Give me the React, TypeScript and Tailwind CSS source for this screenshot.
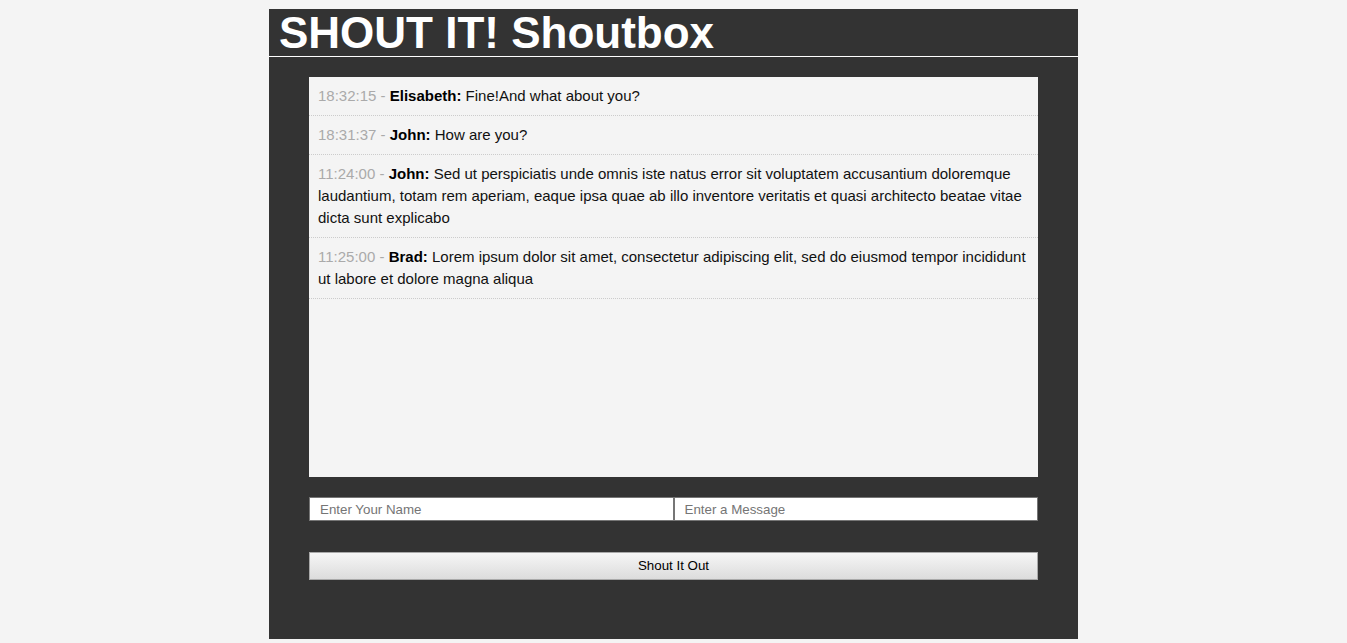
import React from "react";

const msgs = [
  { t: "18:32:15", n: "Elisabeth", m: "Fine!And what about you?" },
  { t: "18:31:37", n: "John", m: "How are you?" },
  {
    t: "11:24:00",
    n: "John",
    m: "Sed ut perspiciatis unde omnis iste natus error sit voluptatem accusantium doloremque laudantium, totam rem aperiam, eaque ipsa quae ab illo inventore veritatis et quasi architecto beatae vitae dicta sunt explicabo",
  },
  {
    t: "11:25:00",
    n: "Brad",
    m: "Lorem ipsum dolor sit amet, consectetur adipiscing elit, sed do eiusmod tempor incididunt ut labore et dolore magna aliqua",
  },
];

export default function App() {
  return (
    <div
      className="min-h-[643px] bg-[#f4f4f4] pt-[9px]"
      style={{ fontFamily: '"Liberation Sans", Arial, sans-serif' }}
    >
      <div className="mx-auto w-[809px] h-[630px] bg-[#333333]">
        <header className="h-[48px] border-b border-white pl-[10px]">
          <h1 className="text-[44px] font-bold leading-[48px] text-white">SHOUT IT! Shoutbox</h1>
        </header>
        <div className="px-[40px] pt-[20px]">
          <ul className="h-[400px] bg-[#f4f4f4]">
            {msgs.map((x, i) => (
              <li key={i} className="border-b border-dotted border-[#cccccc] px-[9px] py-[8px] text-[15px] leading-[22px] text-[#111]">
                <span className="text-[#aaaaaa]">{x.t} - </span>
                <strong className="text-black">{x.n}:</strong> {x.m}
              </li>
            ))}
          </ul>
          <div className="mt-[20px] flex">
            <input
              className="h-[24px] w-1/2 border border-[#767676] bg-white px-[10px] text-[13.33px] text-black placeholder:text-[#757575] outline-none"
              placeholder="Enter Your Name"
            />
            <input
              className="h-[24px] w-1/2 border border-[#767676] bg-white px-[10px] text-[13.33px] text-black placeholder:text-[#757575] outline-none"
              placeholder="Enter a Message"
            />
          </div>
          <button className="mt-[31px] h-[28px] w-full border border-[#a9a9a9] bg-gradient-to-b from-[#f6f6f6] to-[#dcdcdc] text-[13.33px] text-black">
            Shout It Out
          </button>
        </div>
      </div>
    </div>
  );
}
